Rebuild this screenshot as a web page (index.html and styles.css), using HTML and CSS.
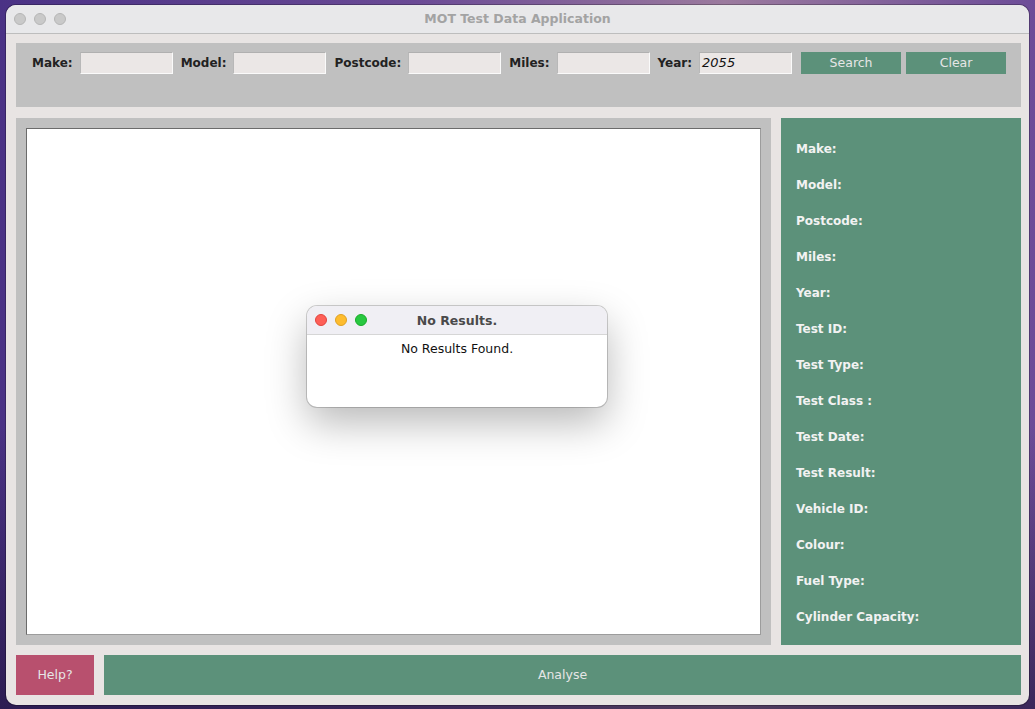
FILE: index.html
```html
<!DOCTYPE html>
<html>
<head>
<meta charset="utf-8">
<title>MOT Test Data Application</title>
<link rel="stylesheet" href="styles.css">
</head>
<body>
<div class="window">
  <div class="titlebar">
    <div class="lights">
      <span class="light gray"></span><span class="light gray"></span><span class="light gray"></span>
    </div>
    <div class="title">MOT Test Data Application</div>
  </div>
  <div class="content">
    <div class="search-panel">
      <div class="search-row">
        <label class="lbl">Make:</label><div class="field"></div>
        <label class="lbl">Model:</label><div class="field"></div>
        <label class="lbl">Postcode:</label><div class="field"></div>
        <label class="lbl">Miles:</label><div class="field"></div>
        <label class="lbl">Year:</label><div class="field year">2055</div>
        <div class="btn search">Search</div>
        <div class="btn clear">Clear</div>
      </div>
    </div>
    <div class="main">
      <div class="results-panel">
        <div class="results"></div>
      </div>
      <div class="details">
        <div class="d">Make:</div>
        <div class="d">Model:</div>
        <div class="d">Postcode:</div>
        <div class="d">Miles:</div>
        <div class="d">Year:</div>
        <div class="d">Test ID:</div>
        <div class="d">Test Type:</div>
        <div class="d">Test Class :</div>
        <div class="d">Test Date:</div>
        <div class="d">Test Result:</div>
        <div class="d">Vehicle ID:</div>
        <div class="d">Colour:</div>
        <div class="d">Fuel Type:</div>
        <div class="d">Cylinder Capacity:</div>
      </div>
    </div>
    <div class="bottom">
      <div class="btn help">Help?</div>
      <div class="btn analyse">Analyse</div>
    </div>
  </div>
  <div class="dialog">
    <div class="dlg-title">
      <div class="lights dlg-lights">
        <span class="light red"></span><span class="light yellow"></span><span class="light green"></span>
      </div>
      <div class="dlg-name">No Results.</div>
    </div>
    <div class="dlg-body">No Results Found.</div>
  </div>
</div>
</body>
</html>
```

FILE: styles.css
```css
html, body {
  margin: 0;
  padding: 0;
  width: 1035px;
  height: 709px;
  overflow: hidden;
}
body {
  background:
    linear-gradient(180deg, rgba(0,0,0,0) 0%, rgba(0,0,0,0) 60%, rgba(20,10,40,0.55) 100%),
    linear-gradient(90deg, #4a3285 0%, #6a4a95 40%, #9b7a9e 70%, #6c4c98 100%);
  padding: 5px 6px 0 6px;
  box-sizing: border-box;
  font-family: "DejaVu Sans", "Liberation Sans", sans-serif;
}
.window {
  position: relative;
  width: 1023px;
  height: 700px;
  background: #e8e4e3;
  border-radius: 10px;
  overflow: hidden;
  box-shadow: 0 0 0 1px rgba(0,0,0,0.25);
  display: flex;
  flex-direction: column;
}
.titlebar {
  position: relative;
  height: 28px;
  background: #e8e8ea;
  border-bottom: 1px solid #bdbdbd;
  display: flex;
  align-items: center;
  justify-content: center;
  flex: none;
}
.lights {
  position: absolute;
  left: 8px;
  top: 8px;
  display: flex;
  gap: 8px;
}
.light {
  width: 12px;
  height: 12px;
  border-radius: 50%;
  box-sizing: border-box;
}
.light.gray { background: #c9c9c9; border: 1px solid #b5b5b5; }
.light.red { background: #fe5f57; border: 1px solid #e0443e; }
.light.yellow { background: #febc2e; border: 1px solid #dea123; }
.light.green { background: #28c840; border: 1px solid #1aab29; }
.title {
  font-weight: bold;
  font-size: 12.5px;
  color: #a3a3a3;
  margin-bottom: 2px;
}
.content {
  flex: 1;
  padding: 9px 8px 10px 10px;
  display: flex;
  flex-direction: column;
}
.search-panel {
  height: 64px;
  background: #c0c0c0;
  padding: 9px 0 0 16px;
  box-sizing: border-box;
  flex: none;
}
.search-row {
  display: flex;
  align-items: center;
  height: 22px;
}
.lbl {
  font-weight: bold;
  font-size: 12px;
  color: #222;
  margin-right: 7px;
  margin-top: -1px;
}
.field {
  width: 93px;
  height: 22px;
  box-sizing: border-box;
  background: #ebe7e6;
  border-top: 1px solid #b0b0b0;
  border-left: 1px solid #b8b8b8;
  border-right: 1px solid #fafafa;
  border-bottom: 1px solid #fafafa;
  margin-right: 8px;
}
.field.year {
  font-style: italic;
  font-size: 13px;
  color: #111;
  padding-left: 2px;
  line-height: 20px;
}
.btn {
  display: flex;
  align-items: center;
  justify-content: center;
  color: #e6e6e6;
  font-size: 12.5px;
  box-sizing: border-box;
}
.btn.search, .btn.clear {
  width: 100px;
  height: 22px;
  background: #5c917a;
  padding-bottom: 2px;
}
.btn.search { margin-left: 1px; }
.btn.clear { margin-left: 5px; }
.main {
  flex: 1;
  margin-top: 11px;
  display: flex;
  gap: 10px;
  min-height: 0;
}
.results-panel {
  width: 755px;
  background: #c0c0c0;
  padding: 10px;
  box-sizing: border-box;
  display: flex;
}
.results {
  flex: 1;
  background: #fff;
  border-top: 1px solid #6b6b6b;
  border-left: 1px solid #6b6b6b;
  border-right: 1px solid #9c9c9c;
  border-bottom: 1px solid #9c9c9c;
}
.details {
  flex: 1;
  background: #5c917a;
  padding: 22px 0 0 15px;
  display: flex;
  flex-direction: column;
}
.d {
  height: 36px;
  line-height: 18px;
  font-weight: bold;
  font-size: 12px;
  color: #f2f2f2;
}
.bottom {
  height: 40px;
  margin-top: 10px;
  display: flex;
  gap: 10px;
  flex: none;
}
.btn.help {
  width: 78px;
  background: #b8506e;
  padding-bottom: 2px;
}
.btn.analyse {
  flex: 1;
  background: #5c917a;
  padding-bottom: 2px;
}
.dialog {
  position: absolute;
  left: 301px;
  top: 301px;
  width: 300px;
  height: 101px;
  background: #fff;
  border-radius: 10px;
  overflow: hidden;
  box-shadow: 0 0 0 1px rgba(0,0,0,0.18), 0 16px 40px rgba(0,0,0,0.28);
}
.dlg-title {
  position: relative;
  height: 28px;
  background: #f0eff4;
  border-bottom: 1px solid #d6d6d6;
  display: flex;
  align-items: center;
  justify-content: center;
}
.dlg-lights {
  left: 8px;
  top: 8px;
}
.dlg-name {
  font-weight: bold;
  font-size: 12.5px;
  color: #4a4a4a;
}
.dlg-body {
  text-align: center;
  font-size: 12.5px;
  color: #111;
  padding-top: 6px;
}
```
